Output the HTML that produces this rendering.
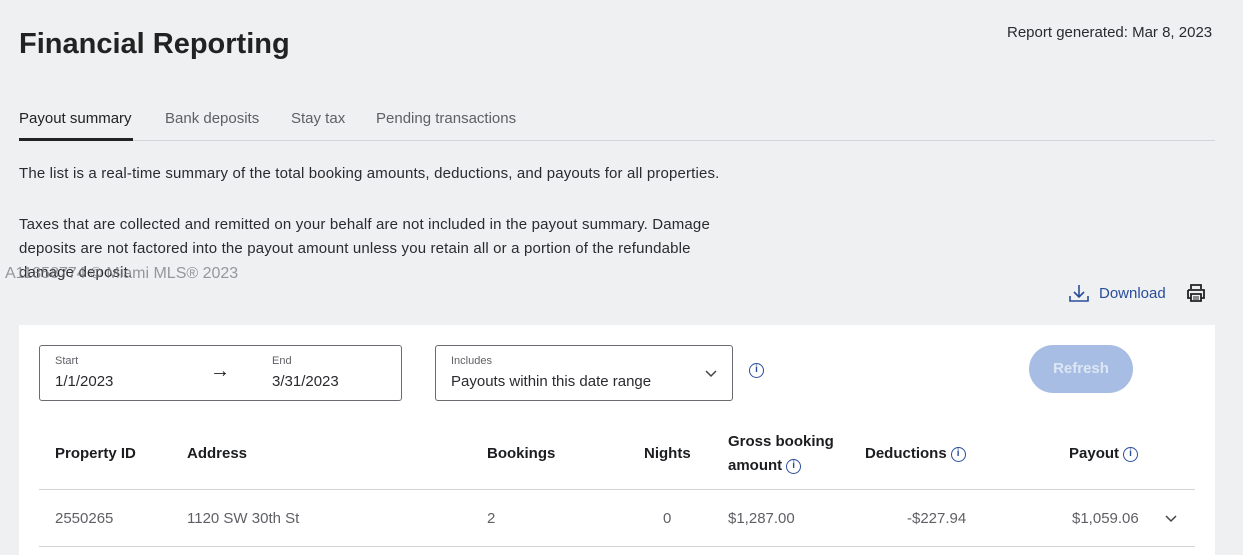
<!DOCTYPE html>
<html><head><meta charset="utf-8"><style>
*{margin:0;padding:0;box-sizing:border-box}
body{width:1243px;height:549px;overflow:hidden;background:#eff0f2;font-family:"Liberation Sans",sans-serif;color:#1c1d20;position:relative}
.a{position:absolute;white-space:nowrap}
.t{font-size:15px;color:#2a2b2f}
.g{color:#5f6066}
.b{font-weight:bold;font-size:15px}
.info{display:inline-block;width:15px;height:15px;border:1.5px solid #2a4d9a;border-radius:50%;font-size:10px;line-height:12px;text-align:center;color:#2a4d9a;font-weight:bold;vertical-align:2px;margin-left:4px}
</style></head><body>
<div class="a" style="left:19px;top:28px;font-size:29px;font-weight:bold;color:#222">Financial Reporting</div>
<div class="a t" style="left:1007px;top:24px">Report generated: Mar 8, 2023</div>
<div class="a t" style="left:19px;top:110px;color:#222">Payout summary</div>
<div class="a t g" style="left:165px;top:110px">Bank deposits</div>
<div class="a t g" style="left:291px;top:110px">Stay tax</div>
<div class="a t g" style="left:376px;top:110px">Pending transactions</div>
<div class="a" style="left:19px;top:140px;width:1196px;height:1px;background:#d3d4d8"></div>
<div class="a" style="left:19px;top:138px;width:114px;height:3px;background:#222"></div>
<div class="a t" style="left:19px;top:165px;letter-spacing:0.16px">The list is a real-time summary of the total booking amounts, deductions, and payouts for all properties.</div>
<div class="a t" style="left:19px;top:213px;line-height:24px;white-space:normal;width:712px;letter-spacing:0.16px">Taxes that are collected and remitted on your behalf are not included in the payout summary. Damage deposits are not factored into the payout amount unless you retain all or a portion of the refundable damage deposit.</div>
<div class="a" style="left:5px;top:265px;font-size:16px;color:rgba(120,120,125,.75)">A11358774 © Miami MLS® 2023</div>
<svg class="a" style="left:1068px;top:283px" width="22" height="20" viewBox="0 0 22 20" fill="none" stroke="#2a4d9a" stroke-width="1.6"><path d="M11 2v12M6 9l5 5 5-5M2 13v5h18v-5"/></svg>
<div class="a t" style="left:1099px;top:285px;color:#2a4d9a">Download</div>
<svg class="a" style="left:1186px;top:283px" width="20" height="20" viewBox="0 0 20 20" fill="none" stroke="#222" stroke-width="1.8"><path d="M5 6V2h10v4M2 7h16v8h-3M5 15H2V7M5 11h10v7H5z"/><path d="M7 14h6M7 16h6" stroke-width="1"/></svg>
<div class="a" style="left:19px;top:325px;width:1196px;height:230px;background:#fff"></div>
<div class="a" style="left:39px;top:345px;width:363px;height:56px;border:1px solid #6b6c72;border-radius:3px"></div>
<div class="a g" style="left:55px;top:355px;font-size:11px">Start</div>
<div class="a t" style="left:55px;top:373px">1/1/2023</div>
<div class="a" style="left:210px;top:360px;font-size:20px">→</div>
<div class="a g" style="left:272px;top:355px;font-size:11px">End</div>
<div class="a t" style="left:272px;top:373px">3/31/2023</div>
<div class="a" style="left:435px;top:345px;width:298px;height:56px;border:1px solid #6b6c72;border-radius:3px"></div>
<div class="a g" style="left:451px;top:355px;font-size:11px">Includes</div>
<div class="a t" style="left:451px;top:373px">Payouts within this date range</div>
<svg class="a" style="left:704px;top:369px" width="14" height="9" viewBox="0 0 14 9" fill="none" stroke="#444" stroke-width="1.5"><path d="M2 2l5 5 5-5"/></svg>
<span class="a info" style="left:749px;top:363px;margin:0">i</span>
<div class="a" style="left:1029px;top:345px;width:104px;height:48px;border-radius:24px;background:#a7bde3;color:#dde6f5;font-weight:bold;font-size:15px;text-align:center;line-height:48px">Refresh</div>
<div class="a b" style="left:55px;top:445px">Property ID</div>
<div class="a b" style="left:187px;top:445px">Address</div>
<div class="a b" style="left:487px;top:445px">Bookings</div>
<div class="a b" style="left:644px;top:445px">Nights</div>
<div class="a b" style="left:728px;top:433px">Gross booking</div>
<div class="a b" style="left:728px;top:457px">amount<span class="info">i</span></div>
<div class="a b" style="left:865px;top:445px">Deductions<span class="info">i</span></div>
<div class="a b" style="left:1069px;top:445px">Payout<span class="info">i</span></div>
<div class="a" style="left:39px;top:489px;width:1156px;height:1px;background:#d3d4d8"></div>
<div class="a t g" style="left:55px;top:510px">2550265</div>
<div class="a t g" style="left:187px;top:510px">1120 SW 30th St</div>
<div class="a t g" style="left:487px;top:510px">2</div>
<div class="a t g" style="left:663px;top:510px">0</div>
<div class="a t g" style="left:728px;top:510px">$1,287.00</div>
<div class="a t g" style="left:907px;top:510px">-$227.94</div>
<div class="a t g" style="left:1072px;top:510px">$1,059.06</div>
<svg class="a" style="left:1164px;top:514px" width="14" height="9" viewBox="0 0 14 9" fill="none" stroke="#444" stroke-width="1.5"><path d="M2 2l5 5 5-5"/></svg>
<div class="a" style="left:39px;top:546px;width:1156px;height:1px;background:#d3d4d8"></div>
</body></html>
